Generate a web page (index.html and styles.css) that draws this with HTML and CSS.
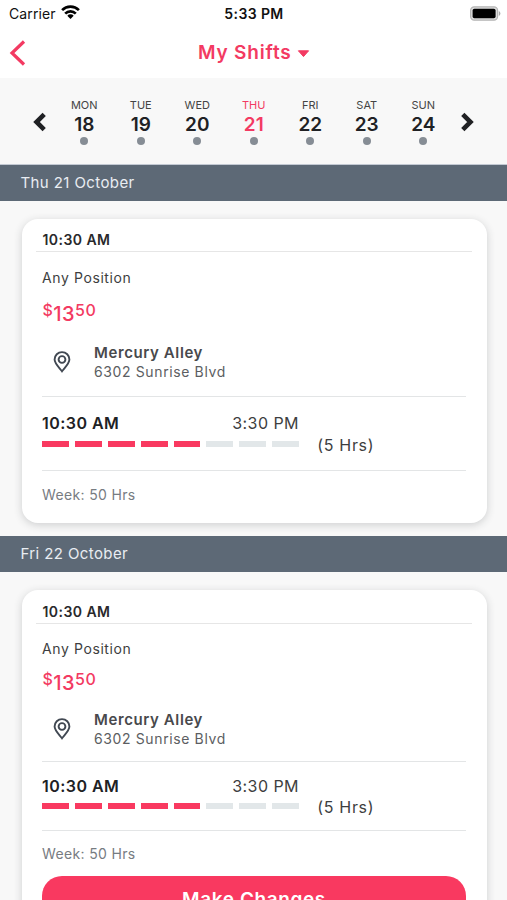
FILE: index.html
```html
<!DOCTYPE html>
<html lang="en">
<head>
<meta charset="utf-8">
<title>My Shifts</title>
<link rel="stylesheet" href="styles.css">
</head>
<body>
<div class="status">
  <div class="carrier"><span>Carrier</span>
    <svg class="wifi" width="19" height="14" viewBox="0 0 19 14"><g fill="none" stroke="#000" stroke-width="2.7"><path d="M1.100 5.100a12 12 0 0 1 16.800 0"/><path d="M4.200 8.600a7.500 7.500 0 0 1 10.600 0"/></g><path d="M9.500 14 6.300 10.700a4.500 4.500 0 0 1 6.400 0z"/></svg>
  </div>
  <span class="clock">5:33 PM</span>
  <svg class="battery" width="31" height="15" viewBox="0 0 31 15"><rect x=".6" y=".8" width="27" height="13.400" rx="3.600" fill="#ddd" stroke="#b5b5b5" stroke-width="1.200"/><rect x="2.600" y="2.800" width="23" height="9.400" rx="1.800"/><path d="M28.800 5v5q1.600-.8 1.600-2.500T28.800 5z" fill="#aaa"/></svg>
</div>
<header class="nav">
  <svg class="back" width="18" height="28" viewBox="0 0 18 28"><path d="M15 2.500 3 14l12 11.500" fill="none" stroke="#f33a62" stroke-width="3.200"/></svg>
  <h1 class="title">My Shifts</h1>
  <svg class="caret" width="13" height="8" viewBox="0 0 13 8"><path d="M1.400.8h10.200L6.500 6.600z" fill="#f33a62" stroke="#f33a62" stroke-linejoin="round"/></svg>
</header>
<nav class="week">
  <svg class="arrow" width="14" height="20" viewBox="0 0 14 20"><path d="M11.200 2.300 3.500 10l7.700 7.700" fill="none" stroke="#202124" stroke-width="4.600"/></svg>
  <div class="days">
    <div class="day"><span class="name">MON</span><b class="num">18</b><i class="dot"></i></div>
    <div class="day"><span class="name">TUE</span><b class="num">19</b><i class="dot"></i></div>
    <div class="day"><span class="name">WED</span><b class="num">20</b><i class="dot"></i></div>
    <div class="day active"><span class="name">THU</span><b class="num">21</b><i class="dot"></i></div>
    <div class="day"><span class="name">FRI</span><b class="num">22</b><i class="dot"></i></div>
    <div class="day"><span class="name">SAT</span><b class="num">23</b><i class="dot"></i></div>
    <div class="day"><span class="name">SUN</span><b class="num">24</b><i class="dot"></i></div>
  </div>
  <svg class="arrow" width="14" height="20" viewBox="0 0 14 20"><path d="M2.800 2.300 10.500 10l-7.700 7.700" fill="none" stroke="#202124" stroke-width="4.600"/></svg>
</nav>
<main>
  <h2 class="date">Thu 21 October</h2>
  <article class="card">
    <div class="head">10:30 AM</div>
    <div class="body">
      <div class="position">Any Position</div>
      <div class="price"><span class="small">$</span><span class="whole">13</span><span class="small">50</span></div>
      <div class="venue">
        <svg class="pin" width="18" height="22" viewBox="0 0 18 22"><path d="M9 20.300C6.600 17 1.600 12.500 1.600 8.500a7.400 7.400 0 0 1 14.800 0C16.400 12.500 11.400 17 9 20.300z" fill="none" stroke="#414852" stroke-width="1.900"/><circle cx="9" cy="8.500" r="3.400" fill="none" stroke="#414852" stroke-width="1.900"/></svg>
        <div><div class="place">Mercury Alley</div><div class="address">6302 Sunrise Blvd</div></div>
      </div>
      <div class="times"><b class="start">10:30 AM</b><span class="end">3:30 PM</span></div>
      <div class="progress"><div class="bars"><i class="on"></i><i class="on"></i><i class="on"></i><i class="on"></i><i class="on"></i><i></i><i></i><i></i></div><span class="hours">(5 Hrs)</span></div>
      <div class="total">Week: 50 Hrs</div>
    </div>
  </article>
  <h2 class="date">Fri 22 October</h2>
  <article class="card compact">
    <div class="head">10:30 AM</div>
    <div class="body">
      <div class="position">Any Position</div>
      <div class="price"><span class="small">$</span><span class="whole">13</span><span class="small">50</span></div>
      <div class="venue">
        <svg class="pin" width="18" height="22" viewBox="0 0 18 22"><path d="M9 20.300C6.600 17 1.600 12.500 1.600 8.500a7.400 7.400 0 0 1 14.800 0C16.400 12.500 11.400 17 9 20.300z" fill="none" stroke="#414852" stroke-width="1.900"/><circle cx="9" cy="8.500" r="3.400" fill="none" stroke="#414852" stroke-width="1.900"/></svg>
        <div><div class="place">Mercury Alley</div><div class="address">6302 Sunrise Blvd</div></div>
      </div>
      <div class="times"><b class="start">10:30 AM</b><span class="end">3:30 PM</span></div>
      <div class="progress"><div class="bars"><i class="on"></i><i class="on"></i><i class="on"></i><i class="on"></i><i class="on"></i><i></i><i></i><i></i></div><span class="hours">(5 Hrs)</span></div>
      <div class="total">Week: 50 Hrs</div>
      <button class="change">Make Changes</button>
    </div>
  </article>
</main>
</body>
</html>
```
FILE: styles.css
```css
* { box-sizing: border-box; }
html, body { height: 900px; overflow: hidden; }
body {
  margin: 0;
  background: #f8f8f8;
  color: #3d3e40;
  font-family: Inter, "Liberation Sans", sans-serif;
  font-size: 15px;
}
h1, h2 { margin: 0; }
.status {
  display: grid;
  grid-template-columns: 1fr auto 1fr;
  align-items: center;
  height: 27px;
  padding: 0 6px 0 9px;
  background: #fff;
  color: #111;
}
.carrier { display: flex; align-items: center; gap: 5px; font-size: 14px; letter-spacing: .1px; }
.wifi { margin-top: -3px; }
.clock { font-size: 14px; font-weight: 600; letter-spacing: .4px; margin-left: -2px; }
.battery { justify-self: end; }
.nav {
  display: grid;
  grid-template-columns: 189px auto 1fr;
  align-items: center;
  height: 51px;
  padding-left: 9px;
  background: #fff;
}
.back { margin-top: 1px; }
.title { color: #f33a62; font-size: 19px; line-height: 24px; font-weight: 600; letter-spacing: .8px; }
.caret { margin: 2px 0 0 6px; }
.week {
  display: flex;
  align-items: flex-start;
  height: 87px;
  padding: 20px 0 0 33px;
  border-bottom: 1px solid #c3c9d3;
}
.arrow { margin-top: 14px; }
.days { display: grid; grid-template-columns: repeat(7, 56.5px); margin: 0 8px 0 9px; }
.day { display: flex; flex-direction: column; align-items: center; color: #202124; }
.name { font-size: 11px; line-height: 15px; color: #444; }
.num { font-size: 19px; line-height: 22px; font-weight: 600; margin-top: 1px; }
.dot { width: 8px; height: 8px; border-radius: 50%; background: #868d95; margin-top: 1px; }
.active .name, .active .num { color: #f33a62; }
.date {
  height: 36px;
  padding-left: 20.5px;
  background: #5d6976;
  color: #e9edf2;
  font-size: 15px;
  line-height: 36px;
  font-weight: 400;
  letter-spacing: .4px;
}
.card {
  height: 303.5px;
  margin: 18px 20.5px 13.5px 21.5px;
  border-radius: 16px;
  background: #fff;
  box-shadow: 0 2px 8px rgba(40, 45, 50, .2);
}
.head {
  margin: 0 14.5px;
  padding: 10px 0 0 6.5px;
  border-bottom: 1px solid #e6e6e6;
  color: #29292b;
  font-size: 14px;
  line-height: 22px;
  font-weight: 600;
  letter-spacing: .45px;
}
.body { padding: 15px 20.5px 0; }
.position { font-size: 14px; line-height: 21px; letter-spacing: .6px; }
.price { display: flex; margin-top: 14px; height: 24px; color: #f33a62; font-weight: 500; padding-left: .5px; }
.whole { font-size: 20px; line-height: 25px; letter-spacing: .4px; }
.small { font-size: 16px; line-height: 16px; letter-spacing: .5px; }
.venue { display: flex; align-items: center; margin-top: 17px; padding-left: 11px; }
.venue > div { margin-left: 23px; }
.place { font-size: 15px; line-height: 19px; font-weight: 600; letter-spacing: .6px; color: #48494c; }
.address { font-size: 14px; line-height: 19px; letter-spacing: .62px; color: #5c5e62; }
.times {
  display: flex;
  justify-content: space-between;
  width: 424px;
  margin-top: 15px;
  padding: 15px 167px 0 0;
  border-top: 1px solid #e3e5e6;
  font-size: 16px;
  line-height: 22px;
  letter-spacing: .45px;
}
.start { font-weight: 600; color: #202124; }
.progress {
  display: flex;
  align-items: center;
  width: 424px;
  height: 37px;
  padding: 1px 0 15px;
  border-bottom: 1px solid #e3e5e6;
}
.bars { display: grid; grid-template-columns: repeat(8, 26.9px); gap: 6px; height: 6px; margin-bottom: 2px; }
.bars i { background: #e2e7e9; }
.bars .on { background: #f93960; }
.hours { margin-left: 18px; font-size: 16px; line-height: 20px; letter-spacing: .7px; }
.total { margin-top: 14px; font-size: 14px; line-height: 20px; letter-spacing: .35px; color: #777c82; }
.compact { height: 360px; }
.compact .head { padding-top: 11px; }
.compact .body { padding-top: 14px; }
.compact .price { margin-top: 12px; }
.compact .venue { margin-top: 15px; }
.compact .times { margin-top: 13px; padding-top: 13px; }
.compact .progress { height: 34px; padding: 0 0 13px; }
.compact .total { margin-top: 13px; }
.change {
  display: block;
  width: 424px;
  height: 48px;
  margin-top: 12px;
  padding: 0;
  border: 0;
  border-radius: 20px;
  background: #f93960;
  color: #fff;
  font: 600 19px/48px Inter, sans-serif;
  letter-spacing: .6px;
}
```
